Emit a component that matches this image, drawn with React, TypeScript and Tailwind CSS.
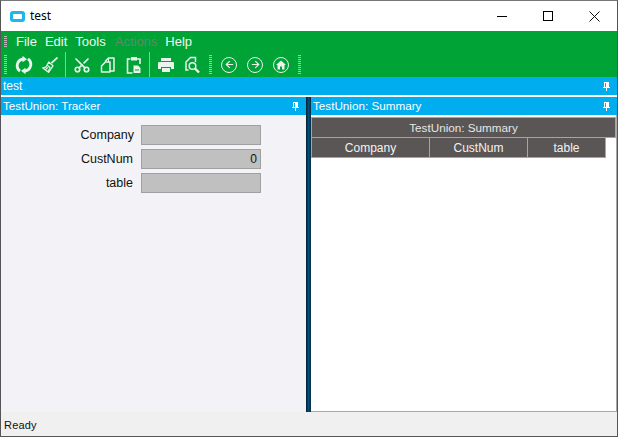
import React from 'react';
import { ArrowLeft, ArrowRight, Scissors } from 'lucide-react';

const sans = "font-['Liberation_Sans',Arial,sans-serif]";

const Grip = ({ className = '' }: { className?: string }) => (
  <div className={`w-[3px] bg-[repeating-linear-gradient(to_bottom,#c4b4bc_0,#c4b4bc_1px,#00a336_1px,#00a336_2px)] ${className}`} />
);

const Pin = () => (
  <svg width="7" height="9" viewBox="0 0 7 9" className="shrink-0" shapeRendering="crispEdges">
    <path d="M1 0h5v5h1v1H4v3H3V6H0V5h1zM2 1v4h1V1z" fill="#fff" />
  </svg>
);

const Sep = () => <div className="ml-[2px] mr-[3px] h-[25px] w-px bg-[#7fcf9a]" />;

const ToolIcon = ({ children }: { children: React.ReactNode }) => (
  <div className="flex h-[25px] w-[26px] items-center justify-center text-[#e9f5ec]">{children}</div>
);

const Circle = ({ children }: { children: React.ReactNode }) => (
  <div className="flex h-[16px] w-[16px] items-center justify-center rounded-full border-[1.5px] border-[#e9f5ec] text-[#e9f5ec]">
    {children}
  </div>
);

const Field = ({ label, value, labelClass }: { label: string; value?: string; labelClass: string }) => (
  <div className="flex items-center">
    <div className={`w-[140px] text-right text-[12.5px] leading-none text-[#111] ${labelClass}`}>{label}</div>
    <div className="flex h-[20px] w-[120px] items-center justify-end border border-[#a0a0a0] bg-[#c0c0c0] pr-[3px] text-[12px] text-[#111]">
      {value}
    </div>
  </div>
);

const App: React.FC = () => {
  return (
    <div className={`flex h-[437px] w-[618px] flex-col overflow-hidden border border-[#555] border-t-[#777] bg-white ${sans}`}>
      {/* title bar */}
      <div className="flex h-[30px] shrink-0 items-center bg-white">
        <div className="ml-[9px] flex h-[11px] w-[15px] items-center justify-center rounded-[3px] bg-[#1fb6ea]">
          <div className="h-[5px] w-[9px] rounded-[1px] bg-white" />
        </div>
        <span className="ml-[5px] font-['Noto_Sans',sans-serif] text-[12px] text-black">test</span>
        <div className="ml-auto flex h-full items-center">
          <div className="flex h-full w-[46px] items-center justify-center">
            <div className="h-px w-[10px] bg-black" />
          </div>
          <div className="flex h-full w-[46px] items-center justify-center">
            <div className="h-[10px] w-[10px] border border-black" />
          </div>
          <div className="flex h-full w-[46px] items-center justify-center">
            <svg width="11" height="11" viewBox="0 0 11 11">
              <path d="M.5.5l10 10M10.5.5l-10 10" stroke="#111" fill="none" />
            </svg>
          </div>
        </div>
      </div>

      {/* menu */}
      <div className="flex h-[21px] shrink-0 items-center bg-[#00a336] pl-[3px] text-[13px] text-[#f2f8f2]">
        <Grip className="h-[12px]" />
        <div className="ml-[9px] flex gap-[8px]">
          <span>File</span>
          <span>Edit</span>
          <span>Tools</span>
          <span className="ml-[1px] text-[#5f8a6b]">Actions</span>
          <span>Help</span>
        </div>
      </div>

      {/* toolbar */}
      <div className="flex h-[25px] shrink-0 items-center bg-[#00a336] pl-[3px]">
        <Grip className="h-[20px]" />
        <div className="ml-[4px] flex items-center">
          <ToolIcon>
            <svg width="18" height="18" viewBox="0 0 18 18" fill="none" stroke="currentColor" strokeWidth="2.800">
              <path d="M5 15.200A6.800 6.800 0 0 1 8 3" />
              <path d="M13 2.800A6.800 6.800 0 0 1 10 15" />
              <path d="M7.500 -.2L12 3.200 7.500 6.200z" fill="currentColor" stroke="none" />
              <path d="M10.500 11.800L6 14.800l4.500 3.400z" fill="currentColor" stroke="none" />
            </svg>
          </ToolIcon>
          <ToolIcon>
            <svg width="16" height="16" viewBox="0 0 16 16" fill="none" stroke="currentColor">
              <path d="M15.500 .5L9.500 6" strokeWidth="1.700" />
              <path d="M6.800 5l4.200 3.800-4.500 6.500L.8 11l3-.8z" strokeWidth="1.300" strokeLinejoin="round" />
              <path d="M5 8l3.500 3M3.500 12.500L6 10.500M6 14l1.800-2.500" strokeWidth="1.100" />
            </svg>
          </ToolIcon>
          <Sep />
          <ToolIcon><Scissors size={18} strokeWidth={2.2} className="-rotate-90" /></ToolIcon>
          <ToolIcon>
            <svg width="16" height="16" viewBox="0 0 16 16" fill="none" stroke="currentColor" strokeWidth="1.500" strokeLinejoin="round">
              <path d="M5 4.500L8.500 1H14v13h-4" />
              <path d="M1.500 9L5.500 5H10v10H1.500z" />
              <path d="M8.500 1.500V5" strokeWidth="1.100" />
            </svg>
          </ToolIcon>
          <ToolIcon>
            <svg width="18" height="18" viewBox="0 0 18 18" fill="none" stroke="currentColor" strokeWidth="1.600">
              <path d="M5.500 3H2.500v14h5M12 3h3v5" />
              <path d="M6 1h6v3.500H6z" fill="currentColor" stroke="none" />
              <path d="M8.500 9.500h4.500l2.500 2.500v5H8.500z" fill="currentColor" stroke="none" />
              <path d="M10 14h4" stroke="#00a336" strokeWidth="1" />
            </svg>
          </ToolIcon>
          <Sep />
          <ToolIcon>
            <svg width="18" height="18" viewBox="0 0 18 18" fill="currentColor">
              <path d="M4 2h10v3H4zM2 6h14a1 1 0 0 1 1 1v6h-3v-2H4v2H1V7a1 1 0 0 1 1-1zM5 12h8v4H5z" />
            </svg>
          </ToolIcon>
          <ToolIcon>
            <svg width="18" height="18" viewBox="0 0 18 18" fill="none" stroke="currentColor" strokeWidth="1.500">
              <path d="M5.500 14H3V6l4.500-4.500h5V6" />
              <circle cx="9.500" cy="10" r="3.300" />
              <path d="M12 12.500l4 4" strokeWidth="2.400" />
            </svg>
          </ToolIcon>
          <Grip className="ml-[4px] mr-[9px] h-[20px]" />
          <div className="flex items-center gap-[10px]">
            <Circle><ArrowLeft size={11} strokeWidth={2.5} /></Circle>
            <Circle><ArrowRight size={11} strokeWidth={2.5} /></Circle>
            <Circle>
              <svg width="10" height="10" viewBox="0 0 10 10" fill="currentColor">
                <path d="M5 .5L10 5H8.500v4.500H6V6.500H4v3H1.500V5H0z" />
              </svg>
            </Circle>
          </div>
          <Grip className="ml-[9px] h-[20px]" />
        </div>
      </div>

      {/* document tab */}
      <div className="flex h-[18px] shrink-0 items-center justify-between bg-[#00adef] pl-[2px] pr-[7px] text-[12px] text-white">
        <span>test</span>
        <Pin />
      </div>

      <div className="flex min-h-0 flex-1 pt-[2px]">
        {/* tracker */}
        <div className="flex w-[305px] flex-col bg-[#f3f3f7]">
          <div className="flex h-[18px] shrink-0 items-center justify-between bg-[#00adef] pl-[2px] pr-[7px] text-[11.7px] text-white">
            <span>TestUnion: Tracker</span>
            <Pin />
          </div>
          <div className="flex flex-col gap-[4px] pt-[10px]">
            <Field label="Company" labelClass="pr-[7px]" />
            <Field label="CustNum" value="0" labelClass="pr-[8px]" />
            <Field label="table" labelClass="pr-[8px]" />
          </div>
        </div>

        {/* splitter */}
        <div className="w-[5px] shrink-0 bg-[linear-gradient(to_right,#0a1c2a,#004f78_50%,#0a2a40)]" />

        {/* summary */}
        <div className="flex min-w-0 flex-1 flex-col border-r border-b border-[#a8a8a8] bg-white">
          <div className="mr-[-1px] flex h-[18px] shrink-0 items-center justify-between bg-[#00adef] pl-[2px] pr-[7px] text-[11.7px] text-white">
            <span>TestUnion: Summary</span>
            <Pin />
          </div>
          <div className="mt-[2px] flex h-[21px] w-[305px] items-center justify-center border border-[#a5a5a5] bg-[#5a5655] text-[11.7px] text-[#e6e6e6]">
            TestUnion: Summary
          </div>
          <div className="flex h-[20px] w-[295px] border border-t-0 border-[#a5a5a5] bg-[#5a5655] text-[12px] text-[#f2f2f2]">
            <div className="flex w-[118px] items-center justify-center border-r border-[#a5a5a5]">Company</div>
            <div className="flex w-[98px] items-center justify-center border-r border-[#a5a5a5]">CustNum</div>
            <div className="flex flex-1 items-center justify-center">table</div>
          </div>
        </div>
      </div>

      {/* status */}
      <div className="flex h-[24px] shrink-0 items-center bg-[#f0f0f0] pl-[3px] pt-[2px] text-[11px] tracking-[0.2px] text-[#111]">
        Ready
      </div>
    </div>
  );
};

export default App;
